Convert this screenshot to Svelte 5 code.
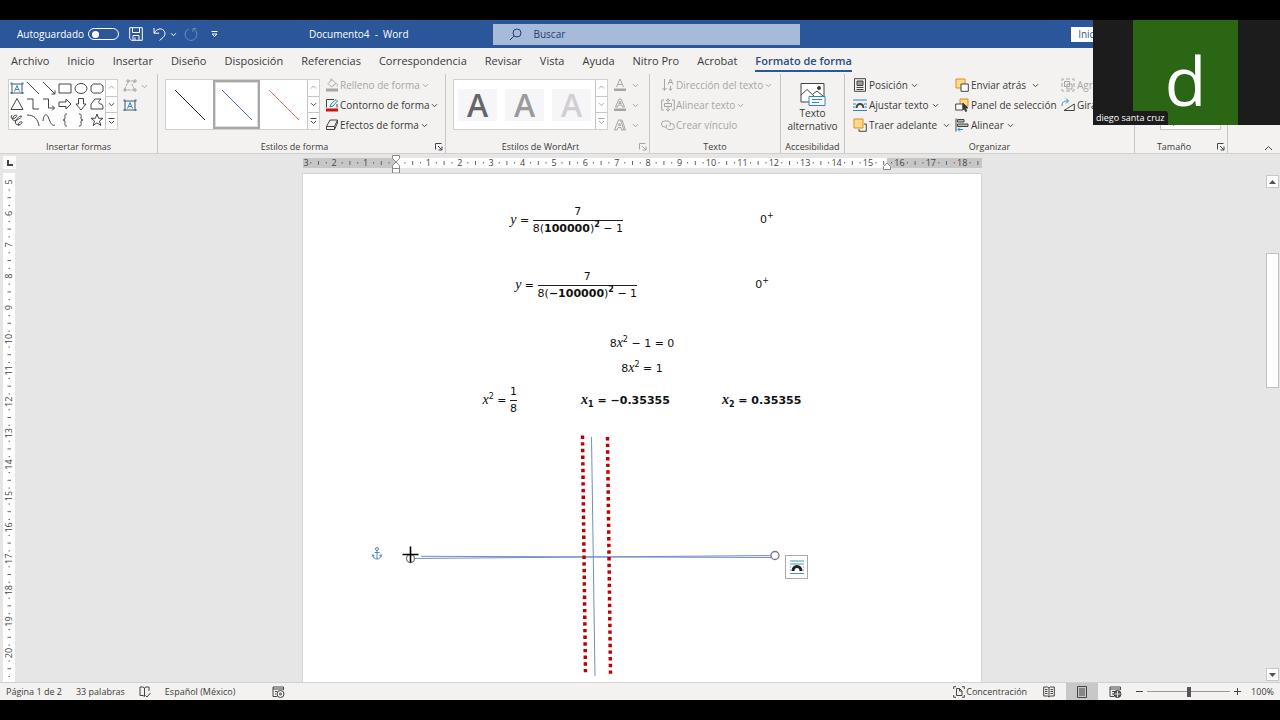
<script>
  const tabs = [
    "Archivo",
    "Inicio",
    "Insertar",
    "Diseño",
    "Disposición",
    "Referencias",
    "Correspondencia",
    "Revisar",
    "Vista",
    "Ayuda",
    "Nitro Pro",
    "Acrobat",
    "Formato de forma"
  ];
  let activeTab = $state("Formato de forma");
  let autosave = $state(false);
  let zoom = $state(50);
  let search = $state("");
  let view = $state("Diseño de impresión");
  let lineStyle = $state(1);

  // outlines on a 16x16 grid
  const shapes = [
    { name: "Línea", d: "M2 2L14 14" },
    { name: "Flecha", d: "M2 2L14 14M14 10.5V14H10.5" },
    { name: "Rectángulo", d: "M2 4H14V13H2Z" },
    { name: "Elipse", d: "M2 8.5A6 5 0 0 1 14 8.5A6 5 0 0 1 2 8.5Z" },
    { name: "Rectángulo redondeado", d: "M4.5 4H11.5L14 6V11L11.5 13H4.5L2 11V6Z" },
    { name: "Triángulo", d: "M8 2.5L14 13.5H2Z" },
    { name: "Conector angular", d: "M2 3H8V13H14" },
    { name: "Conector de flecha", d: "M2 3H7.5V12H13.5M11 9.5L13.5 12L11 14.5" },
    { name: "Flecha derecha", d: "M2 6H9V3L14 8L9 13V10.5H2Z" },
    { name: "Flecha abajo", d: "M5.5 2.5H10.5V8H13L8 14L3 8H5.5Z" },
    { name: "Forma libre", d: "M2 8L6 3H12C9 5 9 8 12 8C14 8 14 11 14 13H2Z" },
    { name: "A mano alzada", d: "M3 3C1 6 3 8 6 6C9 4 8 2 5 4C2 7 4 10 8 8C12 6 14 4 12 4C8 5 5 10 7 12C9 14 14 12 13 10C11 9 8 12 10 14" },
    { name: "Arco", d: "M2 3C9 3 13 7 14 14" },
    { name: "Curva", d: "M2 9C3 1 6 1 8 7S12 14 14 13" },
    { name: "Abrir llave", d: "M10 2C7 2 8 4 8 6S7 8 6 8C7 8 8 8 8 10S7 14 10 14" },
    { name: "Cerrar llave", d: "M6 2C9 2 8 4 8 6S9 8 10 8C9 8 8 8 8 10S9 14 6 14" },
    { name: "Estrella", d: "M8 2L9.6 6.3H14L10.5 9L11.8 13.5L8 10.8L4.2 13.5L5.5 9L2 6.3H6.4Z" }
  ];
  const lineColors = ["#222", "#4a6fae", "#dd7a5c"];

  const CM = 31.4;
  const across = [];
  for (let n = -3; n <= 18; n++) across.push(n);
  const down = [];
  for (let n = 5; n <= 20; n++) down.push(n);
</script>

{#snippet chevron()}
  <svg class="chevron" width="7" height="7" viewBox="0 0 7 7"><path d="M1 2.2L3.5 4.7L6 2.2" /></svg>
{/snippet}

{#snippet launcher(off)}
  <button class="launcher" class:off aria-label="Más opciones">
    <svg width="8" height="8" viewBox="0 0 8 8"><path d="M.5 6.5V.5H6.5M3 3L7 7M7 3.5V7H3.5" /></svg>
  </button>
{/snippet}

{#snippet scroller(off)}
  <div class="scroller" class:off>
    <button aria-label="Fila anterior" class="off"><svg width="7" height="7" viewBox="0 0 7 7"><path d="M1 4.5L3.5 2L6 4.5" /></svg></button>
    <button aria-label="Fila siguiente">{@render chevron()}</button>
    <button aria-label="Más"><svg width="7" height="8" viewBox="0 0 7 8"><path d="M.5 1.5H6.5M1 4L3.5 6.5L6 4" /></svg></button>
  </div>
{/snippet}

<div class="screen">
  <header class="titlebar">
    <div class="quick">
      <label class="autosave">
        Autoguardado
        <input type="checkbox" role="switch" bind:checked={autosave} />
      </label>
      <button class="save" aria-label="Guardar">
        <svg width="14" height="14" viewBox="0 0 14 14"><path d="M.7.7H13.3V13.3H2.5L.7 11.5ZM3.5.7V5.5H10.5V.7M4 13.3V8.5H10V13.3M6 10.5V13" /></svg>
      </button>
      <button class="undo" aria-label="Deshacer">
        <svg width="13" height="14" viewBox="0 0 13 14"><path d="M1 1V6.2H6.2M1.2 6C4 1.5 8 1 10.5 3.2C13 6 12 8.5 10 10.5L6.5 13.5" /></svg>
        {@render chevron()}
      </button>
      <button class="redo" aria-label="Rehacer" disabled>
        <svg width="14" height="14" viewBox="0 0 14 14"><path d="M9 5V1.5H12.5M9.5 2A6 6 0 1 1 4.5 2" /></svg>
      </button>
      <button class="customize" aria-label="Personalizar">
        <svg width="7" height="8" viewBox="0 0 7 8"><path d="M.5 1.5H6.5M1 4H6L3.5 6.5Z" /></svg>
      </button>
      <span class="title">Documento4&nbsp; -&nbsp; Word</span>
    </div>
    <label class="search">
      <svg width="13" height="13" viewBox="0 0 13 13"><circle cx="8" cy="5" r="4" /><path d="M5 8L1 12" /></svg>
      <input type="text" placeholder="Buscar" aria-label="Buscar" bind:value={search} />
    </label>
    <button class="signin">Iniciar sesión</button>
  </header>

  <nav class="tabs">
    {#each tabs as tab}
      <button class:active={tab === activeTab} onclick={() => (activeTab = tab)}>{tab}</button>
    {/each}
  </nav>

  <div class="ribbon">
    <section class="group shapes-group">
      <div class="body">
        <div class="gallery">
          <div class="shapes">
            <button aria-label="Cuadro de texto">
              <svg width="16" height="16" viewBox="0 0 16 16"><path class="frame" d="M3 4H13V13H3Z" /><path class="dots" d="M1.5 2.5h2v2h-2zM12.5 2.5h2v2h-2zM1.5 12h2v2h-2zM12.5 12h2v2h-2z" /><path class="blue" d="M5.5 11.5L8 5.5L10.5 11.5M6.5 9.5H9.5" /></svg>
            </button>
            {#each shapes as shape}
              <button aria-label={shape.name}>
                <svg width="16" height="16" viewBox="0 0 16 16"><path d={shape.d} /></svg>
              </button>
            {/each}
          </div>
          {@render scroller(false)}
        </div>
        <div class="side">
          <button class="off" aria-label="Editar forma">
            <svg width="14" height="14" viewBox="0 0 14 14"><path d="M2 11C2 7 5 5 5 2H12L9 6L12 11H2" stroke-dasharray="3 1" /><path d="M1 10h2v2H1zM4 1h2v2H4zM11 1h2v2h-2zM11 10h2v2h-2z" /></svg>
            {@render chevron()}
          </button>
          <button aria-label="Dibujar cuadro de texto">
            <svg width="14" height="14" viewBox="0 0 14 14"><path class="frame" d="M2 3H12V12H2Z" /><path class="dots" d="M.5 1.5h2v2h-2zM11.5 1.5h2v2h-2zM.5 11h2v2h-2zM11.5 11h2v2h-2z" /><path class="blue" d="M4.5 10.5L7 4.5L9.5 10.5M5.5 8.5H8.5" /></svg>
          </button>
        </div>
      </div>
      <footer>Insertar formas</footer>
    </section>

    <section class="group styles-group">
      <div class="body">
        <div class="gallery">
          <div class="thumbs">
            {#each lineColors as color, i}
              <button class:selected={lineStyle === i} aria-label={"Estilo " + (i + 1)} onclick={() => (lineStyle = i)}>
                <svg width="32" height="32" viewBox="0 0 32 32"><path d="M1 1L31 31" style="stroke: {color}" /></svg>
              </button>
            {/each}
          </div>
          {@render scroller(false)}
        </div>
        <div class="stack">
          <button class="off">
            <svg width="14" height="14" viewBox="0 0 14 14"><path d="M7 1.5L11 5.5L6.5 9L3 5.5ZM6 3V.5M11.5 5.5C13 7 12.5 8 12 8.5" /><path class="bar gray" d="M1 10.5H13V13.5H1Z" /></svg>
            Relleno de forma {@render chevron()}
          </button>
          <button>
            <svg width="14" height="14" viewBox="0 0 14 14"><path d="M9 1.5H1.5V9.5M12 6V9.5" /><path class="blue" d="M5 9L6 6L11 1.5L12.5 3L8 8Z" /><path class="bar red" d="M1 10.5H13V13.5H1Z" /></svg>
            Contorno de forma {@render chevron()}
          </button>
          <button>
            <svg width="14" height="14" viewBox="0 0 14 14"><path d="M5 2H12.5L9.5 8.5H1.5ZM1.5 8.5V11.5H9.5L12.5 5V2M9.5 8.5V11.5" /></svg>
            Efectos de forma {@render chevron()}
          </button>
        </div>
      </div>
      <footer>Estilos de forma{@render launcher(false)}</footer>
    </section>

    <section class="group wordart-group">
      <div class="body">
        <div class="gallery">
          <div class="thumbs arts">
            <button class="art dark">A</button>
            <button class="art mid">A</button>
            <button class="art light">A</button>
          </div>
          {@render scroller(true)}
        </div>
        <div class="stack off">
          <button aria-label="Relleno de texto">
            <svg width="14" height="14" viewBox="0 0 14 14"><path d="M3.5 9L7 1L10.5 9M4.5 6.5H9.5" /><path class="bar gray" d="M1 10.5H13V13H1Z" /></svg>{@render chevron()}
          </button>
          <button aria-label="Contorno de texto">
            <svg width="14" height="14" viewBox="0 0 14 14"><path d="M2.5 9L6 1H8L11.5 9H9.5L8.8 7H5.2L4.5 9ZM5.8 5.5H8.2L7 3Z" /><path class="bar gray" d="M1 10.5H13V13H1Z" /></svg>{@render chevron()}
          </button>
          <button aria-label="Efectos de texto">
            <svg width="14" height="14" viewBox="0 0 14 14"><path d="M1.5 12L5.5 2H7.5L11 12H8.5L8 9.5H5L4 12ZM7.5 2H9L12.5 12H11M5.5 7.5H7.5L6.5 5Z" /></svg>{@render chevron()}
          </button>
        </div>
      </div>
      <footer>Estilos de WordArt{@render launcher(true)}</footer>
    </section>

    <section class="group text-group">
      <div class="body">
        <div class="stack off">
          <button>
            <svg width="14" height="14" viewBox="0 0 14 14"><path d="M3.5 1V12M1.5 10L3.5 12.5L5.5 10M7 6.5L9.5 1L12 6.5M8 4.5H11M9.5 8V12M8 10.5L9.5 12.5L11 10.5" /></svg>
            Dirección del texto {@render chevron()}
          </button>
          <button>
            <svg width="14" height="14" viewBox="0 0 14 14"><path d="M3 2H.7V12H3M11 2H13.3V12H11M7 .5V5M5 3L7 1L9 3M7 9V13.5M5 11L7 13L9 11M3.5 5.5H10.5V8.5H3.5Z" /></svg>
            Alinear texto {@render chevron()}
          </button>
          <button>
            <svg width="14" height="14" viewBox="0 0 14 14"><path d="M5 9H3.5A3 3 0 0 1 3.5 3H7A3 3 0 0 1 8 8.5M9 5.5H10.5A3 3 0 0 1 10.5 11.5H7.5A3 3 0 0 1 6 6.5" /></svg>
            Crear vínculo
          </button>
        </div>
      </div>
      <footer>Texto</footer>
    </section>

    <section class="group alt-group">
      <div class="body">
        <button class="big">
          <svg width="26" height="25" viewBox="0 0 26 25"><path d="M1 1.5H24V20H1ZM1 13L7 7.5L14 14M13 12L17 9L23 14" fill="#fff" /><circle cx="19" cy="6" r="1.5" fill="#333" /><path class="blue note" d="M9 14.5H25V23.5H9Z" /><path class="blue" d="M12 17.5H22M12 20.5H19" /></svg>
          Texto alternativo
        </button>
      </div>
      <footer>Accesibilidad</footer>
    </section>

    <section class="group arrange-group">
      <div class="body">
        <div class="stack first">
          <button>
            <svg width="14" height="14" viewBox="0 0 14 14"><path d="M1.5.7H12.5V13.3H1.5ZM3.5 9.5H10.5M3.5 11.5H10.5" /><path d="M4 3H10V7.5H4Z" fill="#999" /></svg>
            Posición {@render chevron()}
          </button>
          <button>
            <svg width="14" height="14" viewBox="0 0 14 14"><path class="blue" d="M0 2H14M0 6H3M11 6H14M0 9H2M12 9H14M0 12.5H14" /><path d="M3.5 10C4 4.5 10 4.5 10.5 10" stroke-width="2" /></svg>
            Ajustar texto {@render chevron()}
          </button>
          <button>
            <svg width="14" height="14" viewBox="0 0 14 14"><path d="M11 6H13.3V13.3H6V11" /><path class="gold" d="M1 1H10V10H1Z" /></svg>
            Traer adelante <span class="split">{@render chevron()}</span>
          </button>
        </div>
        <div class="stack second">
          <button>
            <svg width="14" height="14" viewBox="0 0 14 14"><path class="gold" d="M1 1H10V10H1Z" /><path d="M6 6H13.3V13.3H6Z" fill="#fff" /></svg>
            Enviar atrás <span class="split">{@render chevron()}</span>
          </button>
          <button>
            <svg width="14" height="14" viewBox="0 0 14 14"><path class="gold" d="M5 1H13V8H5Z" /><path d="M.7 6H8V12H.7Z" fill="#fff" /><path d="M8 5L13 10H10.5L11.8 13L10.5 13.5L9.5 10.8L8 12Z" fill="#333" /></svg>
            Panel de selección
          </button>
          <button>
            <svg width="14" height="14" viewBox="0 0 14 14"><path d="M1 .5V13.5" /><path d="M2.5 1.5H9V4H2.5ZM2.5 6H13V8.5H2.5Z" fill="#bbb" /><path class="blue" d="M8 11.5H3M5 9.5L3 11.5L5 13.5" /></svg>
            Alinear {@render chevron()}
          </button>
        </div>
        <div class="stack">
          <button class="off">
            <svg width="14" height="14" viewBox="0 0 14 14"><path d="M3.5 3.5H8.5V8.5H3.5ZM6 6H11V11H6Z" /><path d="M1 3V1H3M11 1H13V3M13 11V13H11M3 13H1V11M5 1H9M5 13H9M1 5V9M13 5V9" /></svg>
            Agrupar
          </button>
          <button>
            <svg width="14" height="14" viewBox="0 0 14 14"><path d="M3 12.5H13.3V6Z" /><path class="blue" d="M1 8C1 4 3 3 7 3M5 .5L7.5 3L5 5.5" /></svg>
            Girar
          </button>
        </div>
      </div>
      <footer>Organizar</footer>
    </section>

    <section class="group size-group">
      <div class="body">
        <input type="text" aria-label="Alto" value="0 cm" />
        <input type="text" aria-label="Ancho" value="11,5 cm" />
      </div>
      <footer>Tamaño{@render launcher(false)}</footer>
    </section>
    <button class="collapse" aria-label="Contraer la cinta">
      <svg width="9" height="6" viewBox="0 0 9 6"><path d="M1 5L4.5 1.5L8 5" /></svg>
    </button>
  </div>

  <main class="workspace">
    <div class="left-rule">
      <button class="tabstop" aria-label="Tabulación izquierda"><svg width="6" height="6" viewBox="0 0 6 6"><path d="M1 0V5H6" stroke-width="2" /></svg></button>
      <svg class="vruler" width="12">
        {#each down as n}
          {@const y = 9 + (n - 5) * CM}
          <text transform="translate(9 {y}) rotate(-90)">{n}</text>
          <path d="M5.5 {y + 8}h1.5M4.5 {y + 15.7}h3.5M5.5 {y + 23.5}h1.5" />
        {/each}
      </svg>
    </div>

    <div class="canvas">
      <svg class="hruler" width="679" height="20" viewBox="0 0 679 20">
        <rect width="679" height="10" y="4" fill="#c6c6c6" />
        <rect x="93" width="491" height="10" y="4" fill="#fff" />
        {#each across as n}
          {@const x = 94 + n * CM}
          {#if n !== 0}
            <text x={n === -3 ? 3 : x} y="12">{Math.abs(n)}</text>
          {/if}
          <path d="M{x + 8} 8v1.5M{x + 15.7} 7v4M{x + 23.5} 8v1.5" />
        {/each}
        <path class="marker" d="M89.5 1.5H96.5V4.5L93 8L89.5 4.5ZM93 8L96.5 11.5V14.5H89.5V11.5ZM89.5 14.5H96.5V19H89.5Z" />
        <path class="marker" d="M584 9L587.5 12.5V15.5H580.5V12.5Z" />
      </svg>

      <article class="page">
        <div class="row wide-gap">
          <span class="eq"><i>y</i> = <span class="frac"><span>7</span><span>8(<b>100000</b>)<sup><b>2</b></sup> − 1</span></span></span>
          <span class="eq">0<sup>+</sup></span>
        </div>
        <div class="row mid-gap">
          <span class="eq"><i>y</i> = <span class="frac"><span>7</span><span>8(<b>−100000</b>)<sup><b>2</b></sup> − 1</span></span></span>
          <span class="eq">0<sup>+</sup></span>
        </div>
        <div class="row line"><span class="eq">8<i>x</i><sup>2</sup> − 1 = 0</span></div>
        <div class="row line"><span class="eq">8<i>x</i><sup>2</sup> = 1</span></div>
        <div class="row roots">
          <span class="eq"><i>x</i><sup>2</sup> = <span class="frac"><span>1</span><span>8</span></span></span>
          <b class="eq"><i>x</i><sub>1</sub> = −0.35355</b>
          <b class="eq"><i>x</i><sub>2</sub> = 0.35355</b>
        </div>

        <svg class="drawing" width="678" height="508" viewBox="303 174 678 508">
          <path class="axis" d="M591.5 437L595 676M421 556.3L771 557.5M410 558.5L775 555.5" />
          <path class="asymptote" d="M582.5 435.5L585.5 674M607.5 437L610.5 674" />
          <circle cx="410.5" cy="558.5" r="4" />
          <circle cx="775" cy="555.5" r="4" />
          <path class="cross" d="M402.5 554.5H418.5M410.5 546.5V562.5" />
          <g class="anchor"><circle cx="377" cy="549" r="1.5" /><path d="M377 550.5V559M374.5 552.5H379.5M373 555C373 558 375 559 377 559S381 558 381 555M372.5 556.5L373 554.5L374.5 556M381.5 556.5L381 554.5L379.5 556" /></g>
        </svg>
        <button class="layout" aria-label="Opciones de diseño">
          <svg width="16" height="16" viewBox="0 0 16 16"><path class="teal" d="M1 2H15M1 5H15M1 8H2M14 8H15M1 11H2M14 11H15M1 14.5H15" /><path class="arch" d="M4 12C4 6 12 6 12 12" /></svg>
        </button>
      </article>
    </div>

    <div class="scrollbar">
      <button aria-label="Subir"><svg width="7" height="4" viewBox="0 0 7 4"><path d="M0 4L3.5 0L7 4Z" /></svg></button>
      <div class="track"><div class="thumb"></div></div>
      <button aria-label="Bajar"><svg width="7" height="4" viewBox="0 0 7 4"><path d="M0 0L3.5 4L7 0Z" /></svg></button>
    </div>
  </main>

  <footer class="status">
    <span>Página 1 de 2</span>
    <span>33 palabras</span>
    <button aria-label="Revisión">
      <svg width="12" height="12" viewBox="0 0 12 12"><path d="M5.5 2V10.5L4 9.5H1V1H4ZM5.5 2L7 1H10V5M6.5 9.5L8 11L11.5 7" /></svg>
    </button>
    <span>Español (México)</span>
    <button class="macro" aria-label="Grabar macro">
      <svg width="13" height="12" viewBox="0 0 13 12"><path d="M5 10.5H1V1H11.5V4M1 3H11.5M3 5.5H5M3 8H4" /><circle cx="8.5" cy="8" r="3.5" /><circle cx="8.5" cy="8" r="1" /></svg>
    </button>
    <button class="focus">
      <svg width="12" height="12" viewBox="0 0 12 12"><path d="M3 .7H.7V3M9 .7H11.3V3M.7 9V11.3H3M11.3 9V11.3H9M3.5 2.5H6.5L9 5V9.5H3.5ZM6.5 2.5V5H9" /></svg>
      Concentración
    </button>
    <button class="view" class:on={view === "Lectura"} aria-label="Lectura" onclick={() => (view = "Lectura")}>
      <svg width="12" height="12" viewBox="0 0 12 12"><path d="M6 2V11L4.5 10H.7V1H4.5ZM6 2L7.5 1H11.3V10H7.5L6 11M2 3.5H4.5M2 5.5H4.5M2 7.5H4.5M7.5 3.5H10M7.5 5.5H10M7.5 7.5H10" /></svg>
    </button>
    <button class="view" class:on={view === "Diseño de impresión"} aria-label="Diseño de impresión" onclick={() => (view = "Diseño de impresión")}>
      <svg width="12" height="12" viewBox="0 0 12 12"><path d="M1.5.5H10.5V11.5H1.5ZM3 3H9M3 5H9M3 7H9M3 9H9" /></svg>
    </button>
    <button class="view" class:on={view === "Diseño web"} aria-label="Diseño web" onclick={() => (view = "Diseño web")}>
      <svg width="13" height="12" viewBox="0 0 13 12"><path d="M5 10.5H1V1H11.5V4M1 3H11.5M3 5.5H6M3 8H5" /><circle cx="8.5" cy="8" r="3.5" fill="#555" /><path class="globe" d="M5.5 8H11.5M8.5 5V11" /></svg>
    </button>
    <button class="step" aria-label="Alejar"><svg width="7" height="7" viewBox="0 0 7 7"><path d="M0 3.5H7" /></svg></button>
    <input type="range" min="0" max="100" aria-label="Zoom" bind:value={zoom} />
    <button class="step" aria-label="Acercar"><svg width="7" height="7" viewBox="0 0 7 7"><path d="M0 3.5H7M3.5 0V7" /></svg></button>
    <span class="percent">100%</span>
  </footer>

  <aside class="call">
    <div class="avatar">d</div>
    <span class="who">diego santa cruz</span>
  </aside>
</div>

<style>
  :global(body) {
    margin: 0;
    background: #000;
  }
  .screen {
    position: relative;
    display: flex;
    flex-direction: column;
    box-sizing: border-box;
    min-height: 100vh;
    padding: 20px 0;
    overflow: hidden;
    background: #000;
    color: #3b3a39;
    font: 10px/14px "Open Sans", "Noto Sans", sans-serif;
  }
  button,
  input {
    margin: 0;
    padding: 0;
    border: 0;
    background: none;
    color: inherit;
    font: inherit;
  }
  button {
    display: flex;
    align-items: center;
    white-space: nowrap;
  }
  svg {
    flex: none;
    fill: none;
    stroke: #444;
  }

  .titlebar {
    display: grid;
    grid-template-columns: 1fr 307px 1fr;
    align-items: center;
    height: 28px;
    padding-left: 12px;
    background: #2b579a;
    color: #fff;
  }
  .titlebar svg {
    stroke: #fff;
  }
  .quick {
    display: flex;
    align-items: center;
    padding-left: 5px;
  }
  .autosave {
    display: flex;
    align-items: center;
    gap: 4px;
    margin-right: 10px;
  }
  .autosave input {
    appearance: none;
    display: flex;
    align-items: center;
    box-sizing: border-box;
    width: 31px;
    height: 12px;
    padding: 0 3px;
    border: 1px solid #fff;
    border-radius: 6px;
  }
  .autosave input::before {
    content: "";
    width: 7px;
    height: 7px;
    border-radius: 50%;
    background: #fff;
  }
  .autosave input:checked {
    justify-content: flex-end;
  }
  .save {
    margin-right: 10px;
  }
  .undo {
    gap: 4px;
    margin-right: 7px;
  }
  .redo {
    margin-right: 13px;
    opacity: 0.3;
  }
  .title {
    margin: 0 84px 0 auto;
    white-space: nowrap;
  }
  .search {
    display: flex;
    align-items: center;
    gap: 12px;
    height: 21px;
    padding-left: 16px;
    background: #a6bbd7;
  }
  .titlebar .search svg {
    stroke: #1f3f70;
  }
  .search input {
    flex: 1;
    outline: 0;
    color: #1f3f70;
  }
  .search input::placeholder {
    color: #1f3f70;
    opacity: 1;
  }
  .signin {
    justify-self: end;
    height: 15px;
    margin-right: 134px;
    padding: 0 7px;
    background: #fff;
    color: #2b579a;
  }

  .tabs {
    display: flex;
    gap: 18px;
    height: 26px;
    padding-left: 11px;
    background: #f3f2f1;
    font-size: 11px;
  }
  .tabs button {
    height: 24px;
    box-sizing: border-box;
    padding-top: 4px;
    border-bottom: 2px solid transparent;
  }
  .tabs .active {
    border-bottom-color: #2b579a;
    color: #2b4a80;
    font-weight: 600;
  }

  .ribbon {
    display: flex;
    height: 79px;
    border-bottom: 1px solid #d2d0ce;
    background: #f3f2f1;
  }
  .group {
    display: flex;
    flex: none;
    flex-direction: column;
    justify-content: space-between;
    box-sizing: border-box;
    padding-top: 1px;
    border-right: 1px solid #c8c6c4;
  }
  .group footer {
    position: relative;
    font-size: 9px;
    line-height: 12px;
    text-align: center;
  }
  .body {
    display: flex;
  }
  .launcher {
    position: absolute;
    right: 2px;
    top: 2px;
  }
  .off {
    color: #a8a6a4;
  }
  .off svg {
    stroke: #a8a6a4;
  }
  .shapes-group {
    width: 158px;
  }
  .shapes-group .body {
    padding-left: 8px;
  }
  .styles-group {
    width: 288px;
  }
  .styles-group .body,
  .wordart-group .body {
    padding-left: 7px;
  }
  .styles-group footer {
    padding-right: 14px;
  }
  .wordart-group {
    width: 204px;
  }
  .wordart-group footer {
    padding-right: 14px;
  }
  .text-group {
    width: 131px;
  }
  .text-group .body {
    padding-left: 6px;
  }
  .alt-group {
    width: 64px;
  }
  .arrange-group {
    width: 290px;
  }
  .arrange-group .body {
    padding-left: 8px;
  }
  .size-group {
    width: 93px;
  }
  .size-group footer {
    padding-right: 14px;
  }

  .gallery {
    display: flex;
    box-sizing: border-box;
    height: 51px;
    margin-top: 4px;
    border: 1px solid #d2d0ce;
    background: #fff;
  }
  .shapes {
    display: grid;
    grid-template-columns: repeat(6, 16px);
    grid-auto-rows: 16px;
  }
  .scroller {
    display: flex;
    flex-direction: column;
    width: 11px;
    border-left: 1px solid #c8c6c4;
  }
  .scroller button {
    flex: 1;
    justify-content: center;
    border-bottom: 1px solid #c8c6c4;
  }
  .scroller button:last-child {
    border-bottom: 0;
  }
  .side {
    display: flex;
    flex-direction: column;
    gap: 5px;
    padding: 4px 0 0 5px;
  }
  .side button {
    gap: 4px;
  }
  svg .frame {
    stroke: #555;
  }
  svg .dots {
    fill: #2b88c8;
    stroke: none;
  }
  svg .blue {
    stroke: #2b88c8;
  }
  svg .note {
    fill: #fff;
  }
  svg .gold {
    fill: #ffd98c;
    stroke: #e08a1e;
  }
  svg .bar {
    stroke: none;
  }
  svg .gray {
    fill: #a8a6a4;
  }
  svg .red {
    fill: #d01010;
  }

  .thumbs {
    display: flex;
  }
  .thumbs button {
    justify-content: center;
    box-sizing: border-box;
    width: 47px;
  }
  .thumbs .selected {
    border: 2px solid #a8a8a8;
    box-shadow: inset 0 0 0 1px #ddd;
  }
  .arts {
    align-items: center;
  }
  .arts .art {
    height: 40px;
    border: 4px solid #fff;
    background: #f6f5f8;
    font-size: 32px;
    font-weight: 600;
  }
  .dark {
    color: #66656a;
  }
  .mid {
    color: #9a9a9c;
  }
  .light {
    color: #d3cdd3;
  }

  .stack {
    display: flex;
    flex-direction: column;
    padding-left: 5px;
  }
  .stack button {
    gap: 1px;
    height: 20px;
  }
  .stack .chevron {
    margin-left: 1px;
  }
  .wordart-group .stack .chevron {
    margin-left: 4px;
  }
  .first {
    width: 102px;
  }
  .second {
    width: 106px;
  }
  .arrange-group .stack {
    padding-left: 0;
  }
  .arrange-group .stack button {
    gap: 2px;
  }
  .split {
    margin-left: 3px;
  }
  .big {
    flex-direction: column;
    width: 100%;
    padding-top: 7px;
    line-height: 13px;
    white-space: normal;
  }
  .size-group .body {
    flex-direction: column;
    gap: 13px;
    padding: 4px 0 0 25px;
  }
  .size-group input {
    box-sizing: border-box;
    width: 61px;
    height: 19px;
    border: 1px solid #c8c6c4;
    background: #fff;
  }
  .collapse {
    margin: auto 7px 2px auto;
  }

  .workspace {
    display: grid;
    grid-template-columns: 18px 1fr 14px;
    flex: 1;
    min-height: 0;
    background: #e6e6e6;
  }
  .left-rule {
    display: flex;
    flex-direction: column;
    gap: 4px;
    padding-left: 3px;
  }
  .tabstop {
    flex: none;
    justify-content: center;
    width: 13px;
    height: 13px;
    margin-top: 2px;
    background: #fafafa;
  }
  .vruler {
    flex: 1;
    background: #fff;
  }
  .vruler text,
  .hruler text {
    fill: #444;
    stroke: none;
    font-size: 9px;
    text-anchor: middle;
  }
  .vruler path,
  .hruler path {
    stroke: #666;
  }
  .hruler rect {
    stroke: none;
  }
  .hruler .marker {
    fill: #fff;
    stroke: #888;
  }
  .canvas {
    display: flex;
    flex-direction: column;
    align-items: center;
    min-width: 0;
  }
  .page {
    position: relative;
    flex: 1;
    box-sizing: border-box;
    width: 678px;
    padding-top: 26px;
    background: #fff;
    box-shadow: 0 0 0 1px #d4d4d4;
    color: #111;
    font: 11px/16px "DejaVu Sans", sans-serif;
  }
  .row {
    display: flex;
    align-items: center;
    justify-content: center;
    height: 40px;
    margin-bottom: 25px;
  }
  .wide-gap {
    gap: 137px;
  }
  .mid-gap {
    gap: 118px;
    margin-bottom: 30px;
  }
  .line {
    height: 16px;
    margin-bottom: 9px;
  }
  .roots {
    gap: 52px;
    height: 30px;
  }
  .roots .eq:first-child {
    margin-right: 12px;
  }
  .eq {
    white-space: nowrap;
  }
  .eq i {
    font-family: "Liberation Serif", serif;
    font-size: 14px;
  }
  sup,
  sub {
    font-size: 8px;
    line-height: 0;
  }
  .frac {
    display: inline-flex;
    flex-direction: column;
    align-items: center;
    vertical-align: middle;
  }
  .frac span:last-child {
    border-top: 1px solid #222;
  }
  .drawing {
    position: absolute;
    left: 0;
    top: 0;
  }
  .drawing .axis {
    stroke: #6f8fc4;
  }
  .drawing .asymptote {
    stroke: #c00000;
    stroke-width: 3.5;
    stroke-dasharray: 3.4 3.27;
  }
  .drawing circle {
    fill: #fff;
    stroke: #777;
    stroke-width: 1.3;
  }
  .drawing .cross {
    stroke: #000;
    stroke-width: 1.6;
  }
  .drawing .anchor circle,
  .anchor path {
    fill: none;
    stroke: #4a86b8;
    stroke-width: 1;
  }
  .layout {
    position: absolute;
    left: 482px;
    top: 381px;
    justify-content: center;
    box-sizing: border-box;
    width: 23px;
    height: 24px;
    border: 1px solid #aaa;
    background: #fff;
  }
  .layout .teal {
    stroke: #4a9aa8;
  }
  .layout .arch {
    stroke: #222;
    stroke-width: 3;
  }

  .scrollbar {
    display: flex;
    flex-direction: column;
    padding: 21px 1px 1px 0;
  }
  .scrollbar button {
    justify-content: center;
    height: 13px;
    border: 1px solid #c8c8c8;
    background: #fff;
  }
  .scrollbar button path {
    fill: #555;
    stroke: none;
  }
  .track {
    display: flex;
    flex: 1;
    flex-direction: column;
    padding-top: 65px;
  }
  .thumb {
    box-sizing: border-box;
    height: 135px;
    border: 1px solid #c0c0c0;
    background: #fff;
  }

  .status {
    display: flex;
    align-items: center;
    height: 18px;
    padding: 0 6px;
    border-top: 1px solid #d2d0ce;
    box-sizing: border-box;
    background: #f3f2f1;
    font-size: 9px;
    white-space: nowrap;
  }
  .status > span {
    margin-right: 14px;
  }
  .status > button {
    height: 100%;
    margin-right: 14px;
  }
  .status .macro {
    margin-left: 23px;
  }
  .status .focus {
    gap: 1px;
    margin-left: auto;
    margin-right: 6px;
  }
  .status .view {
    justify-content: center;
    width: 32px;
    margin-right: 1px;
  }
  .status .on {
    background: #c8c8c8;
  }
  .status .globe {
    stroke: #ddd;
  }
  .status .step {
    margin: 0 4px;
  }
  .status input {
    appearance: none;
    width: 83px;
    height: 12px;
    background: linear-gradient(#999, #999) center / 100% 1px no-repeat;
  }
  .status input::-webkit-slider-thumb {
    appearance: none;
    width: 4px;
    height: 10px;
    background: #555;
  }
  .status .percent {
    margin: 0 0 0 6px;
  }

  .call {
    position: absolute;
    right: 0;
    top: 20px;
    display: flex;
    width: 187px;
    height: 105px;
    background: #1c1c1c;
    color: #fff;
  }
  .avatar {
    width: 105px;
    margin-left: 40px;
    background: #2b6614;
    font-size: 68px;
    font-weight: 500;
    line-height: 120px;
    text-align: center;
  }
  .who {
    position: absolute;
    left: 0;
    bottom: 0;
    padding: 0 3px;
    border-radius: 0 3px 0 0;
    background: #1c1c1c;
    font-size: 9px;
  }
</style>
